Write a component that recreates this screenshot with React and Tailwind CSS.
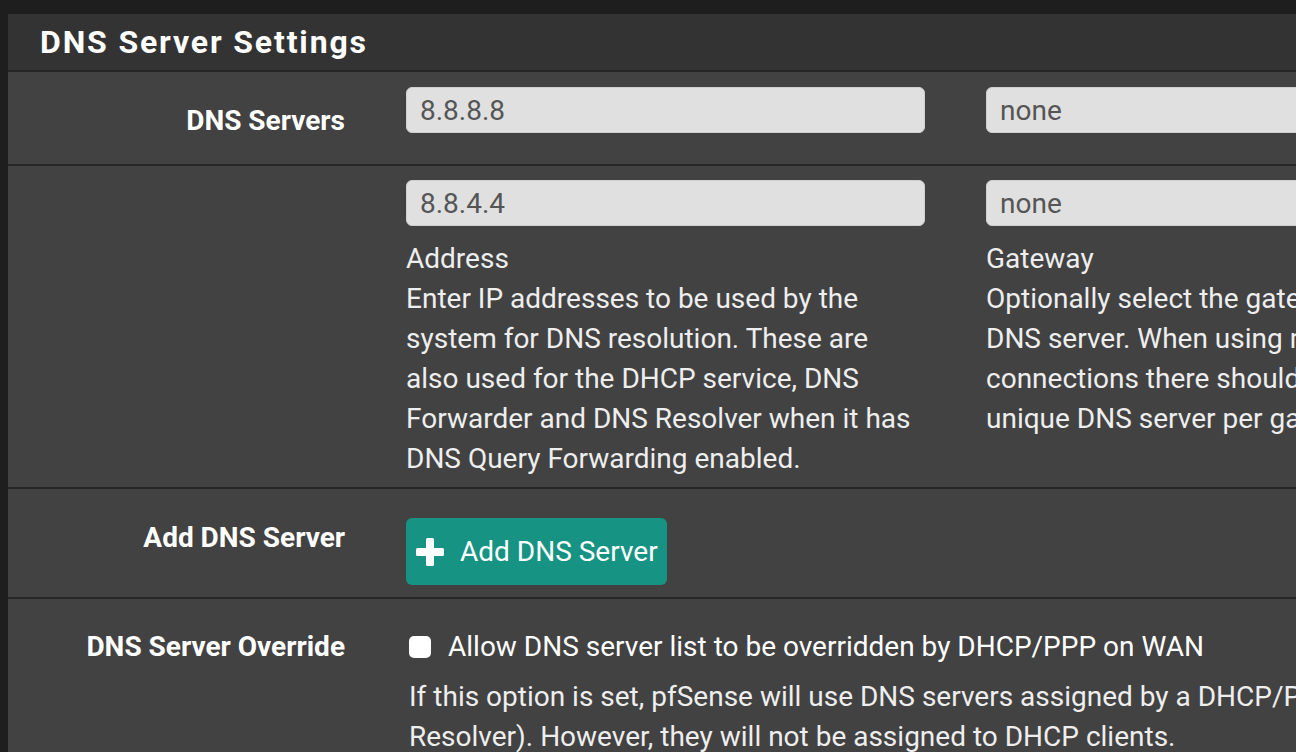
import React from 'react'

function PlusIcon() {
  return (
    <svg width="28" height="28" viewBox="0 0 28 28" className="shrink-0">
      <rect x="10" y="0" width="8" height="28" rx="1.5" fill="#fff" />
      <rect x="0" y="10" width="28" height="8" rx="1.5" fill="#fff" />
    </svg>
  )
}

function Row({ label, children, labelPad = 'pt-[29px]' }) {
  return (
    <div className="flex border-b-2 border-[#262626]">
      <div className={`w-[337px] shrink-0 ${labelPad} text-right font-bold text-white leading-[40px]`}>
        {label}
      </div>
      <div className="ml-[61px] flex-1 min-w-0">{children}</div>
    </div>
  )
}

function Field({ value }) {
  return (
    <div className="h-[46px] rounded-[6px] bg-[#e0e0e0] border border-[#cfcfcf] px-[13px] flex items-center text-[#555] leading-none">
      <span className="mt-[2px]">{value}</span>
    </div>
  )
}

export default function App() {
  return (
    <div
      className="w-[1296px] h-[752px] overflow-hidden bg-[#1e1e1e] pl-[8px] pt-[14px] text-[28px] leading-[40px]"
      style={{ fontFamily: 'Roboto, "Noto Sans", sans-serif' }}
    >
      <div className="w-[1400px] bg-[#424242]">
        <div className="h-[58px] bg-[#333333] border-b-2 border-[#262626] pl-[32px] flex items-center">
          <h2 className="text-[32px] font-bold text-white tracking-[1.85px] leading-none">
            DNS Server Settings
          </h2>
        </div>

        <Row label="DNS Servers">
          <div className="flex gap-[61px] pt-[15px] pb-[31px]">
            <div className="w-[519px] shrink-0">
              <Field value="8.8.8.8" />
            </div>
            <div className="w-[519px] shrink-0">
              <Field value="none" />
            </div>
          </div>
        </Row>

        <Row label="">
          <div className="flex gap-[61px] pt-[14px] pb-[8px]">
            <div className="w-[519px] shrink-0">
              <Field value="8.8.4.4" />
              <div className="mt-[13px] text-[#eeeeee]">
                <div>Address</div>
                <div>
                  Enter IP addresses to be used by the system for DNS resolution. These are
                  also used for the DHCP service, DNS Forwarder and DNS Resolver when it has
                  DNS Query Forwarding enabled.
                </div>
              </div>
            </div>
            <div className="w-[519px] shrink-0">
              <Field value="none" />
              <div className="mt-[13px] text-[#eeeeee]">
                <div>Gateway</div>
                <div>
                  Optionally select the gateway for each DNS server. When using multiple WAN
                  connections there should be at least one unique DNS server per gateway.
                </div>
              </div>
            </div>
          </div>
        </Row>

        <Row label="Add DNS Server">
          <div className="pt-[29px] pb-[12px]">
            <button className="h-[67px] w-[261px] rounded-[6px] bg-[#179383] text-white flex items-center gap-[16px] pl-[10px] leading-none">
              <PlusIcon />
              <span>Add DNS Server</span>
            </button>
          </div>
        </Row>

        <div className="flex">
          <div className="w-[337px] shrink-0 pt-[28px] text-right font-bold text-white leading-[40px]">
            DNS Server Override
          </div>
          <div className="ml-[61px] pt-[28px] text-[#eeeeee]">
            <label className="flex items-center gap-[17px] text-white">
              <span className="ml-[3px] w-[22px] h-[22px] rounded-[5px] bg-white shrink-0"></span>
              <span>Allow DNS server list to be overridden by DHCP/PPP on WAN</span>
            </label>
            <div className="mt-[10px] pl-[3px] whitespace-nowrap">
              <div>
                If this option is set, pfSense will use DNS servers assigned by a DHCP/PPP server
                on WAN for its own purposes (including the DNS Forwarder/DNS
              </div>
              <div>Resolver). However, they will not be assigned to DHCP clients.</div>
            </div>
          </div>
        </div>
      </div>
    </div>
  )
}
